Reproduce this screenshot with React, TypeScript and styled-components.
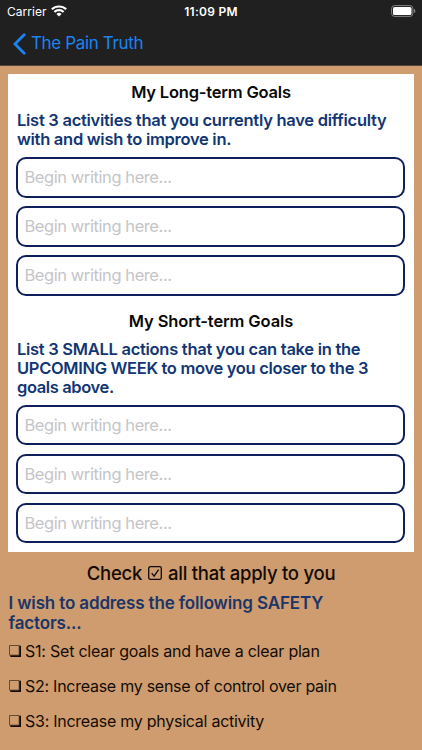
import React from 'react';
import styled, { createGlobalStyle } from 'styled-components';

const GlobalStyle = createGlobalStyle`
  * { box-sizing: border-box; }
  body {
    margin: 0;
    background: #ce9c6e;
    font-family: Inter, "Liberation Sans", sans-serif;
    overflow: hidden;
  }
`;

const Screen = styled.div`
  display: flex;
  flex-direction: column;
  width: 422px;
  height: 750px;
  overflow: hidden;
  background: #ce9c6e;
`;

const Header = styled.header`
  height: 66px;
  flex: none;
  background: #202021;
  border-bottom: 1px solid #514439;
`;

const StatusBar = styled.div`
  display: grid;
  grid-template-columns: 1fr auto 1fr;
  align-items: center;
  height: 22px;
  padding: 0 6px 0 7px;
  color: #fff;
  font-size: 12px;
`;

const Carrier = styled.div`
  display: flex;
  align-items: center;
  gap: 5px;
  letter-spacing: 0.02px;
`;

const Clock = styled.div`
  margin-right: 1px;
  font-weight: 600;
  letter-spacing: 0.25px;
`;

const BatteryIcon = styled.svg`
  justify-self: end;
`;

const BackButton = styled.button`
  display: flex;
  align-items: center;
  gap: 5px;
  height: 43px;
  padding: 0 0 0 13px;
  border: 0;
  background: none;
  color: #1c84f2;
  font: 400 17px/22px Inter, sans-serif;
  letter-spacing: -0.36px;
`;

const BackLabel = styled.span`
  padding-bottom: 1px;
`;

const Card = styled.main`
  display: flex;
  flex-direction: column;
  flex: none;
  height: 478px;
  margin: 7.5px 8.4px 0 8.4px;
  padding: 8.5px 8px 0;
  background: #fff;
`;

const Heading = styled.h2<{ $track: number }>`
  margin: 0;
  height: 20px;
  font-size: 16.5px;
  font-weight: 600;
  line-height: 20px;
  text-align: center;
  color: #0a0a0a;
  letter-spacing: ${p => p.$track}px;
`;

const Prompt = styled.p`
  margin: 9px 0 0 0.6px;
  padding-bottom: 0.6px;
  font-size: 16.5px;
  font-weight: 600;
  line-height: 19.3px;
  color: #123674;
`;

const Line = styled.span<{ $track: number }>`
  display: block;
  white-space: nowrap;
  letter-spacing: ${p => p.$track}px;
`;

const Fields = styled.div<{ $top: number; $bottom?: number }>`
  display: grid;
  gap: 8.6px;
  margin: ${p => p.$top}px 0 ${p => p.$bottom ?? 0}px;
`;

const Field = styled.input`
  width: 389px;
  height: 40.4px;
  padding: 0 6px;
  border: 2px solid #0e1f5c;
  border-radius: 10px;
  outline: none;
  background: #fff;
  font: 400 16.5px/20px Inter, sans-serif;
  letter-spacing: -0.42px;
  &::placeholder { color: #c5c5c7; opacity: 1; }
`;

const Checklist = styled.section`
  display: flex;
  flex-direction: column;
  padding: 9px 8.5px 0;
`;

const CheckTitle = styled.h3`
  display: flex;
  justify-content: center;
  align-items: center;
  gap: 6px;
  margin: 0;
  height: 24px;
  font-size: 18.5px;
  font-weight: 500;
  line-height: 24px;
  letter-spacing: -0.25px;
  color: #120b06;
`;

const Factors = styled.p`
  margin: 8px 0 8.5px;
  font-size: 17px;
  font-weight: 600;
  line-height: 20px;
  color: #1b3568;
`;

const Option = styled.label<{ $track: number }>`
  display: flex;
  align-items: center;
  gap: 4.5px;
  height: 20px;
  margin-bottom: 15px;
  font-size: 16px;
  color: #140c06;
  white-space: nowrap;
  letter-spacing: ${p => p.$track}px;
`;

const WifiIcon = () => (
  <svg width="16" height="12" viewBox="0 0 15 12" preserveAspectRatio="none" fill="none" stroke="#fff" strokeWidth="2.1">
    <path d="M.8 4.3a9.5 9.5 0 0 1 13.4 0M3.2 6.9a6.1 6.1 0 0 1 8.6 0" />
    <path d="M7.5 11.4 5.1 9a3.4 3.4 0 0 1 4.8 0Z" fill="#fff" stroke="none" />
  </svg>
);

const Battery = () => (
  <BatteryIcon width="25" height="12" viewBox="0 0 25 12">
    <rect x=".6" y=".6" width="21.3" height="10.8" rx="3" fill="none" stroke="#858585" />
    <rect x="2" y="2" width="18.5" height="8" rx="1.6" fill="#fff" />
    <path d="M23 4v4c1.8-.5 1.8-3.5 0-4Z" fill="#858585" />
  </BatteryIcon>
);

const BackIcon = () => (
  <svg width="13" height="22" viewBox="0 0 13 22" fill="none" stroke="currentColor" strokeWidth="2.8" strokeLinecap="round">
    <path d="M11.2 1.8 2 11l9.2 9.2" />
  </svg>
);

const TickedBox = () => (
  <svg width="14" height="14" viewBox="0 0 14 14" fill="none" stroke="#120b06" strokeWidth="1.3">
    <rect x=".7" y=".7" width="12.6" height="12.6" rx="1.6" />
    <path d="m3.7 7.2 2.4 2.9 4.5-6.5" />
  </svg>
);

const ShadowBox = () => (
  <svg width="12" height="12" viewBox="0 0 12 12">
    <path d="M10 0.8H12V12H1.3V10H10Z" fill="#140c06" />
    <rect x=".4" y=".4" width="9.8" height="9.8" rx=".5" fill="#ce9c6e" stroke="#3a291b" strokeWidth=".8" />
  </svg>
);

const FieldGroup = ({ top, bottom }: { top: number; bottom?: number }) => (
  <Fields $top={top} $bottom={bottom}>
    {[1, 2, 3].map(n => <Field key={n} placeholder="Begin writing here..." />)}
  </Fields>
);

const options = [
  { text: 'S1: Set clear goals and have a clear plan', track: -0.22 },
  { text: 'S2: Increase my sense of control over pain', track: -0.26 },
  { text: 'S3: Increase my physical activity', track: -0.26 },
];

export default function App() {
  return (
    <Screen>
      <GlobalStyle />
      <Header>
        <StatusBar>
          <Carrier>Carrier <WifiIcon /></Carrier>
          <Clock>11:09 PM</Clock>
          <Battery />
        </StatusBar>
        <BackButton><BackIcon /><BackLabel>The Pain Truth</BackLabel></BackButton>
      </Header>
      <Card>
        <Heading $track={-0.2}>My Long-term Goals</Heading>
        <Prompt>
          <Line $track={-0.27}>List 3 activities that you currently have difficulty</Line>
          <Line $track={-0.28}>with and wish to improve in.</Line>
        </Prompt>
        <FieldGroup top={7} bottom={15} />
        <Heading $track={-0.13}>My Short-term Goals</Heading>
        <Prompt>
          <Line $track={-0.28}>List 3 SMALL actions that you can take in the</Line>
          <Line $track={-0.32}>UPCOMING WEEK to move you closer to the 3</Line>
          <Line $track={-0.38}>goals above.</Line>
        </Prompt>
        <FieldGroup top={7} />
      </Card>
      <Checklist>
        <CheckTitle><span>Check</span><TickedBox /><span>all that apply to you</span></CheckTitle>
        <Factors>
          <Line $track={-0.14}>I wish to address the following SAFETY</Line>
          <Line $track={-0.14}>factors...</Line>
        </Factors>
        {options.map(o => <Option key={o.text} $track={o.track}><ShadowBox />{o.text}</Option>)}
      </Checklist>
    </Screen>
  );
}
